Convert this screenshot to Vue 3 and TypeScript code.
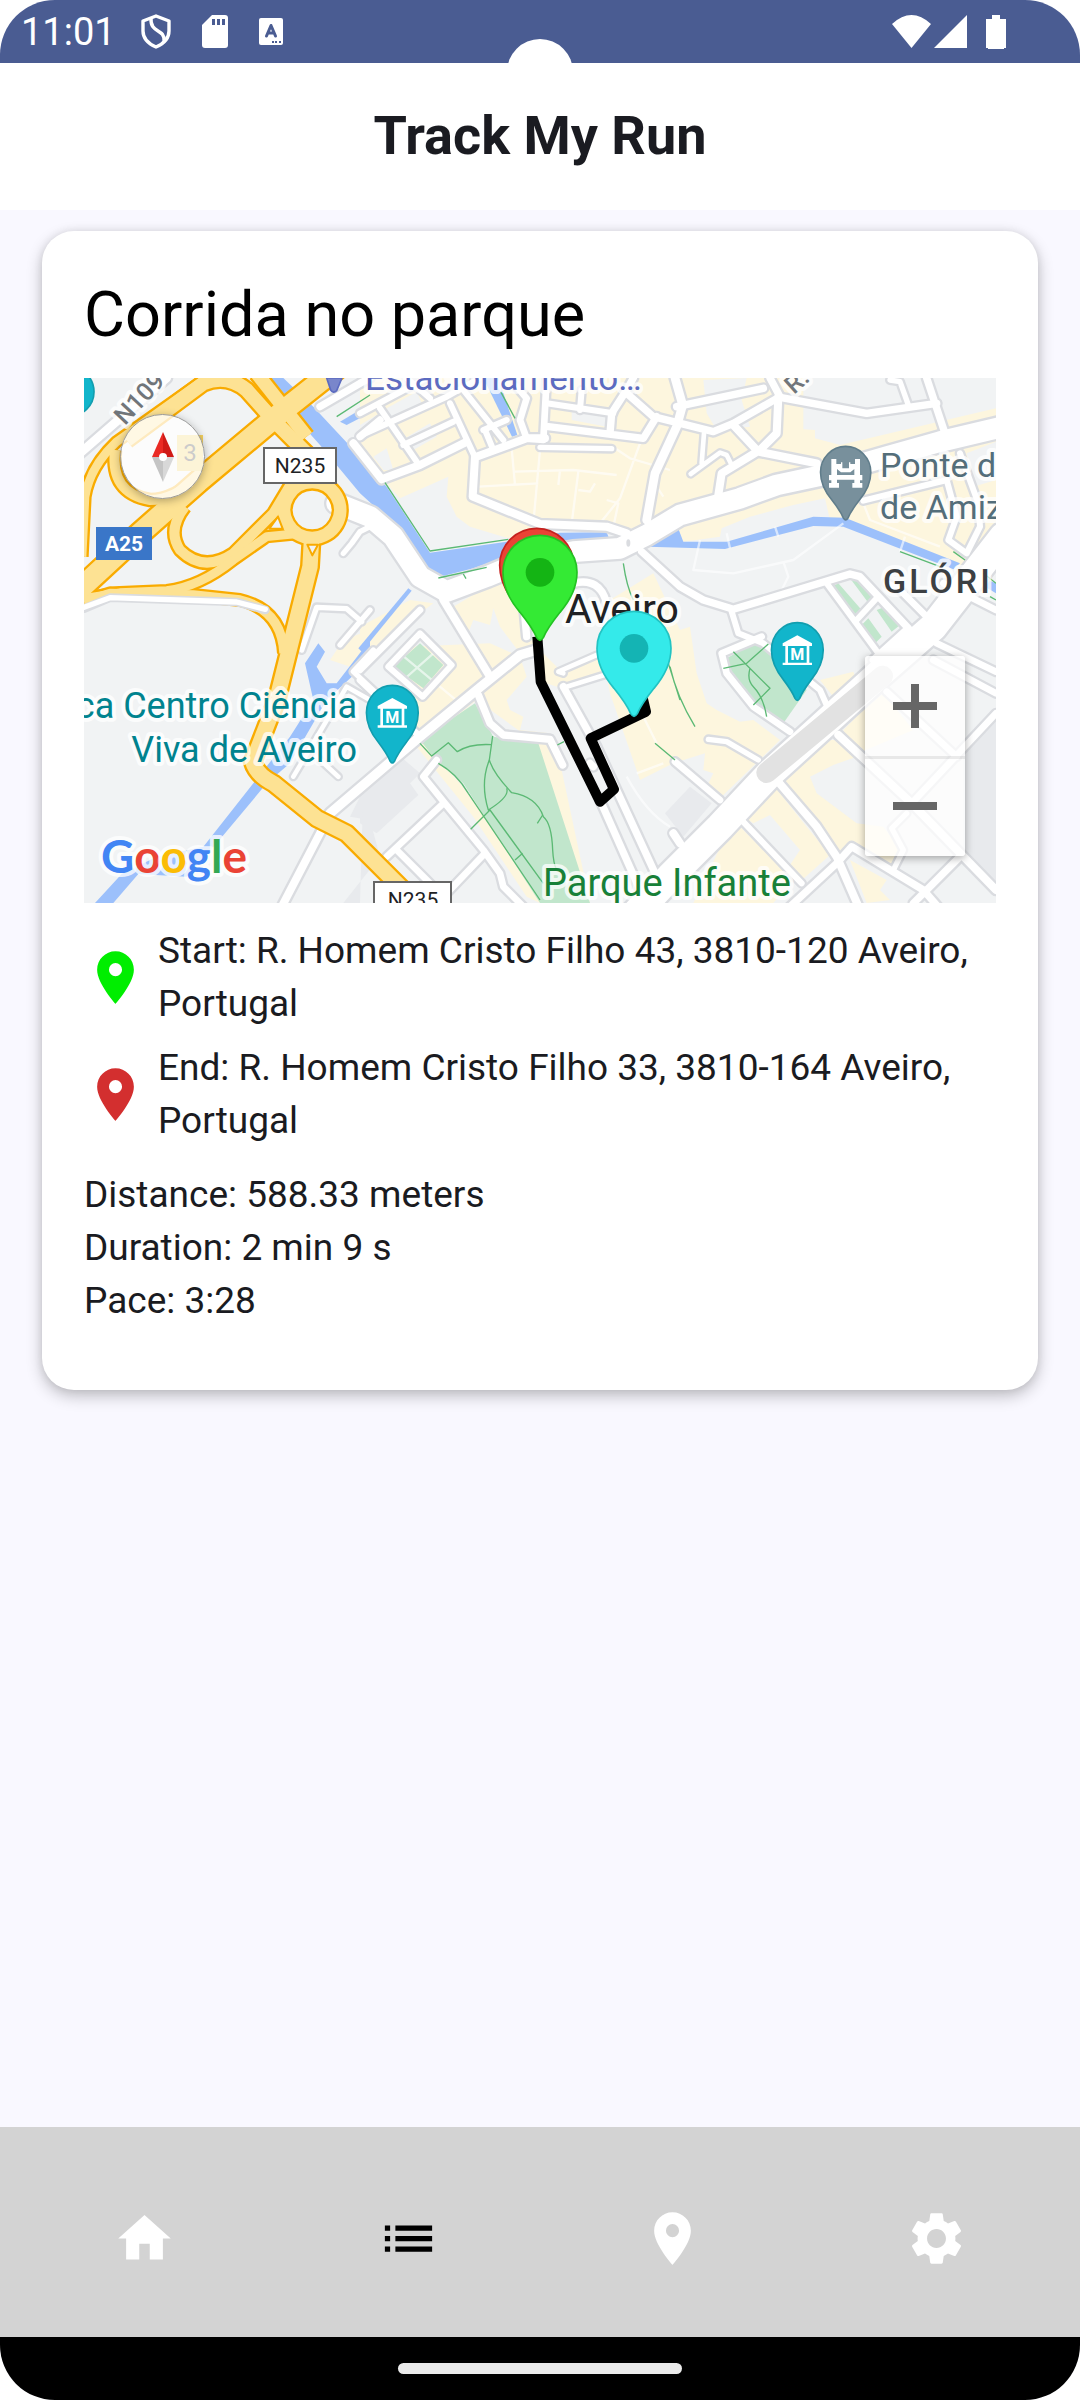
<script setup lang="ts">
interface Road {
  w: number
  d: string
}

interface Place {
  id: string
  label: string
  address: string
  color: string
}

const places: Place[] = [
  { id: 'start', label: 'Start', address: 'R. Homem Cristo Filho 43, 3810-120 Aveiro, Portugal', color: '#00ee00' },
  { id: 'end', label: 'End', address: 'R. Homem Cristo Filho 33, 3810-164 Aveiro, Portugal', color: '#d32f2f' },
]

const stats: string[] = ['Distance: 588.33 meters', 'Duration: 2 min 9 s', 'Pace: 3:28']

const tabs = [
  { id: 'home', name: 'Home', active: false, d: 'M10 20v-6h4v6h5v-8h3L12 3 2 12h3v8z' },
  { id: 'runs', name: 'Runs', active: true, d: 'M3 13h2v-2H3v2zm0 4h2v-2H3v2zm0-8h2V7H3v2zm4 4h14v-2H7v2zm0 4h14v-2H7v2zM7 7v2h14V7H7z' },
  { id: 'track', name: 'Track', active: false, d: 'M12 2C8.13 2 5 5.13 5 9c0 5.25 7 13 7 13s7-7.75 7-13c0-3.87-3.13-7-7-7zm0 9.5a2.5 2.5 0 1 1 0-5 2.5 2.5 0 0 1 0 5z' },
  { id: 'settings', name: 'Settings', active: false, d: 'M19.14 12.94c.04-.3.06-.61.06-.94 0-.32-.02-.64-.07-.94l2.03-1.58c.18-.14.23-.41.12-.61l-1.92-3.32c-.12-.22-.37-.29-.59-.22l-2.39.96c-.5-.38-1.03-.7-1.62-.94l-.36-2.54c-.04-.24-.24-.41-.48-.41h-3.84c-.24 0-.43.17-.47.41l-.36 2.54c-.59.24-1.13.57-1.62.94l-2.39-.96c-.22-.08-.47 0-.59.22L2.74 8.87c-.12.21-.08.47.12.61l2.03 1.58c-.05.3-.09.63-.09.94s.02.64.07.94l-2.03 1.58c-.18.14-.23.41-.12.61l1.92 3.32c.12.22.37.29.59.22l2.39-.96c.5.38 1.03.7 1.62.94l.36 2.54c.05.24.24.41.48.41h3.84c.24 0 .44-.17.47-.41l.36-2.54c.59-.24 1.13-.56 1.62-.94l2.39.96c.22.08.47 0 .59-.22l1.92-3.32c.12-.22.07-.47-.12-.61l-2.01-1.58zM12 15.6c-1.98 0-3.6-1.62-3.6-3.6s1.62-3.6 3.6-3.6 3.6 1.62 3.6 3.6-1.62 3.6-3.6 3.6z' },
]

const pinIcon = tabs[2].d

const blocks: string[] = [
  'M900 24H2230V178L2265 180V205L2340 225L2808 115V215L2720 250L2740 350L2808 330V460L2700 590L2530 535L2390 470L2310 450L2295 385L2200 405L2070 440L1985 475L1980 500L1870 515L1850 465L1660 480L1480 470L1345 505L1230 470L1190 440L1160 380L1165 320L1020 385L975 335L900 240Z',
  'M900 770L1050 690L1120 700L1080 730L900 900Z',
  'M1180 710L1330 620L1400 680L1420 830L1380 850L1320 770L1300 715L1290 765L1240 750L1220 800Z',
  'M1040 830L1290 820L1380 860L1400 920L1340 990L1350 1020L1390 1040L1380 1080L1470 1090L1490 1130L1590 1599H1560L1430 1120L1250 990L1130 1090L1080 1110L1200 1240L1440 1560V1599L1400 1580L1240 1340L1070 1130L1060 1050Z',
  'M1430 830L1500 900L1660 820L1700 780L1650 690L1780 610L1860 780L1890 770L1910 910L1940 1000L1970 1020L2040 1055L2080 1050L2160 1110L1980 1285L1940 1250L1960 1210L1930 1200L1935 1150L1840 1180L1740 1230L1650 970L1640 920L1520 960L1430 930Z',
  'M2170 1225L2310 1110H2335L2390 1160L2320 1185L2250 1220L2270 1270L2390 1360L2470 1370L2530 1450L2500 1500L2370 1420L2330 1450Z',
  'M2050 1340L2140 1245L2240 1370L2310 1455L2220 1535L2180 1500L2220 1440L2130 1335L2080 1360Z',
  'M2280 930L2380 905L2390 930L2320 980ZM2400 1030L2470 970L2560 1080L2370 1160L2350 1080Z',
  'M2370 1470L2480 1530L2460 1560L2490 1590L2420 1599ZM1900 1599L2020 1350L2200 1530L2140 1599Z',
  'M810 870L850 810L930 780V870L900 900Z',
]

const lots: string[] = [
  'M980 115L1070 65L1090 110L1000 165Z',
  'M900 165L950 135L970 170L905 210Z',
  'M1035 205L1110 160L1130 200L1060 240Z',
  'M940 260L980 235L1000 300L970 300Z',
  'M1930 30L2060 24L2045 90L2070 170L1970 180L1940 130Z',
  'M1535 110L1640 130V170L1535 150ZM1680 50L1740 24L1710 80L1670 120Z',
]

const buildings: string[] = [
  'M900 1240L1010 1150L1080 1210L1050 1240L1075 1275L950 1390L900 1360Z',
  'M1815 1330L1890 1250L1955 1300L1870 1400Z',
  'M2808 1025L2710 1120V1450L2808 1550Z',
  'M850 1599L960 1460L930 1350L870 1340L910 1260L900 1599Z',
]

const water: string[] = [
  'M600 24H670L760 110L900 260L980 350L1110 548L1340 515L1500 488L1640 487L1650 512L1500 530L1340 560L1240 595L1135 622L1080 590L1010 470L900 370L780 225Z',
  'M1765 525L1850 463L1870 515L2000 515L2260 440L2355 443L2700 580L2680 598L2350 470L2260 468L1995 537L1765 530Z',
  'M2770 625L2808 640V670L2775 650Z',
  'M1270 24H1315L1372 195L1356 200Z',
  'M840 155L1000 60V92L860 165Z',
  'M105 1599L185 1512L290 1460L430 1430L580 1240L690 1100L760 990L735 880L775 820L795 845L770 890L800 940L830 940L930 810V870L800 990L690 1180L620 1240L470 1420L380 1520L235 1512L160 1599Z',
  'M895 835L1045 655L1055 662L905 845Z',
]

const parks: string[] = [
  'M1080 1110L1245 1000L1300 1100L1435 1120L1590 1599H1440L1280 1350L1210 1240L1135 1180Z',
  'M1000 890L1080 820L1150 885L1090 955Z',
  'M1990 870L2100 810L2240 960L2170 1060L2110 1030Z',
  'M2370 625H2400L2450 690L2430 705ZM2450 720L2475 710L2520 765L2495 785ZM2400 770L2425 745L2465 800L2440 825ZM2315 650L2335 640L2405 720L2385 735Z',
]

const streets: Road[] = [
  { w: 26, d: 'M60 250L320 24' },
  { w: 22, d: 'M780 110L900 40L930 24M900 200L960 150' },
  { w: 16, d: 'M850 550L875 520L900 485L930 470' },
  { w: 16, d: 'M725 840L770 712L860 716L905 755M840 825L930 720' },
  { w: 14, d: 'M700 1220L860 950L930 990M770 1160L835 1220' },
  { w: 24, d: 'M785 1380L660 1620' },
  { w: 24, d: 'M880 220L965 328L1080 285L1215 218' },
  { w: 18, d: 'M960 115L1070 275M905 195L1160 80L1260 24M1030 225L1180 155M1110 85L1040 24M1170 100L1245 262M1275 180L1300 240M1210 60L1330 210M900 130L1100 24M1270 180L1340 150' },
  { w: 24, d: 'M1455 205L1400 205L1245 262L1238 380L1440 462L1640 470L1700 490' },
  { w: 20, d: 'M1370 50L1400 85L1380 150L1400 205L1450 210L1460 24' },
  { w: 18, d: 'M1460 100L1660 130M1560 120L1565 60' },
  { w: 22, d: 'M1465 170L1750 205L1790 140M1650 190L1655 130L1700 60L1720 24M1700 70L1780 140L1960 185L2020 160L2160 80L2130 24' },
  { w: 22, d: 'M1850 110L2110 55' },
  { w: 26, d: 'M1845 24L1868 105L1850 170L1785 310L1760 450' },
  { w: 16, d: 'M1440 232L1655 236' },
  { w: 24, d: 'M2155 80L2150 190L2100 240L1985 310L1975 375M2020 165L2095 245L2270 280' },
  { w: 14, d: 'M1892 312L1980 248L2000 255L2015 285M1932 190L1925 280' },
  { w: 22, d: 'M2160 82L2420 130L2630 100M2600 24L2655 190' },
  { w: 16, d: 'M2490 30L2520 35L2545 105' },
  { w: 18, d: 'M2410 392L2660 330L2690 440L2665 510L2720 550M2700 250L2755 400L2760 470L2720 550' },
  { w: 22, d: 'M1745 545L1860 650L1930 690L2020 718L2370 612L2400 620L2545 775L2440 870' },
  { w: 18, d: 'M2300 640L2455 850M2385 755L2450 685' },
  { w: 18, d: 'M2015 725L2035 790L2110 820L2280 960L2300 1005' },
  { w: 20, d: 'M2105 800L1985 850L2000 910L2080 1010L2190 1085' },
  { w: 16, d: 'M1945 1108L2000 1115L2095 1170' },
  { w: 20, d: 'M1845 1175L1980 1290' },
  { w: 24, d: 'M2335 1095L2555 1300L2808 1560' },
  { w: 20, d: 'M2480 965L2690 1160M2808 1030L2555 1300' },
  { w: 24, d: 'M2150 1230L2270 1370L2330 1460L2400 1620' },
  { w: 18, d: 'M2040 1345L2225 1540' },
  { w: 22, d: 'M2190 1610L2330 1480L2375 1430L2590 1560L2660 1640M2700 1460L2560 1600' },
  { w: 16, d: 'M2540 1330L2495 1375L2530 1440L2500 1500' },
  { w: 20, d: 'M2480 640L2520 660L2600 740M2630 820L2808 905M2620 870L2808 970M2650 640L2808 720' },
  { w: 28, d: 'M810 1330L1080 1100L1250 960L1380 855L1430 840' },
  { w: 22, d: 'M1255 975L1290 1060L1330 1095L1470 1108L1508 1185' },
  { w: 24, d: 'M1150 690L1290 920' },
  { w: 20, d: 'M900 900L1080 720M900 930L1080 1100' },
  { w: 18, d: 'M1080 790L1175 885L1088 980L985 890Z' },
  { w: 16, d: 'M940 840L880 905L960 980' },
  { w: 20, d: 'M1130 1170L1090 1220L1155 1300L1270 1440L1320 1510L1330 1550L1400 1620' },
  { w: 20, d: 'M1150 1300L980 1460M1010 1440L1120 1550M1270 1455L1160 1570' },
  { w: 14, d: 'M1510 910L1495 905L1610 855M1520 950L1650 910' },
  { w: 22, d: 'M1510 950L1610 1130L1790 1520M1620 1290L1740 1560M1600 1190L1590 1180' },
  { w: 22, d: 'M1400 800L1390 690M1540 640Q1620 620 1640 700' },
  { w: 24, d: 'M1840 1390L1860 1420' },
  { w: 62, d: 'M830 400L930 440L1000 500L1080 620L1160 665L1280 620L1400 570L1540 545L1680 535L1760 495L1860 435L2040 385L2150 345L2290 315L2480 260L2640 215L2850 165' },
  { w: 84, d: 'M2830 500L2620 770L2460 910L2130 1210L1980 1370L1830 1520L1700 1660' },
]

const highways: Road[] = [
  { w: 26, d: 'M66 560L75 380Q90 290 170 215L440 24' },
  { w: 42, d: 'M200 210L430 40Q500 10 560 60L640 150L740 250L755 340' },
  { w: 40, d: 'M590 10L740 200' },
  { w: 30, d: 'M165 240Q150 370 270 390Q340 390 420 320' },
  { w: 30, d: 'M375 410Q320 480 360 540Q430 610 520 550L640 430L700 330' },
  { w: 26, d: 'M72 685L180 668L320 662Q420 650 520 570L620 500L720 490' },
  { w: 28, d: 'M72 695L150 670L400 675L540 690Q665 720 672 850' },
  { w: 46, d: 'M755 500L750 590L690 830L650 990L578 1175Q590 1215 640 1240L770 1345L860 1390L1030 1560' },
  { w: 62, d: 'M40 675L240 490L415 335L670 122L830 -5' },
  { w: 38, d: 'M757 336A84 84 0 1 1 756 336Z' },
]

const footpaths: string[] = [
  'M975 338L1110 543L1345 508M1135 624L1280 592M1210 612L1218 626M1322 65L1365 145M1690 580Q1700 650 1720 690',
  'M1080 1120L1115 1158L1165 1118L1192 1145Q1230 1120 1295 1124M1298 1098L1288 1170Q1300 1210 1355 1268Q1430 1280 1450 1340Q1475 1360 1478 1440Q1480 1480 1490 1500',
  'M1288 1170Q1260 1240 1285 1320Q1350 1280 1340 1255M1232 1378L1290 1320L1450 1540M1135 1180Q1190 1210 1225 1270L1440 1590M1365 1470L1388 1450M1448 1335L1432 1360',
  'M1990 895L2060 880L2125 822M2020 845L2130 955L2080 1005M2070 895Q2060 930 2080 950Q2110 980 2120 1040',
  'M1830 890Q1850 980 1905 1070M1825 880L1860 990M1785 1120L1845 1170M1492 1125L1512 1115M2520 545L2640 590M2680 545L2715 570M2770 610L2808 640M2790 680L2808 690M830 140L930 75',
]

const lanes = 'M1255 350L1435 340M1355 235L1365 345M1365 305L1540 300L1670 315M1440 240L1420 460M1500 300L1495 345M1555 305L1535 460M1555 360L1590 365L1605 340M1740 220L1680 385L1620 460M1810 380L1790 350M1665 235L1710 265L1830 300M1640 390L1675 400L1660 470M2000 490L2010 535M2145 470L2155 500M1920 510L1900 600L2020 610L2200 570L2350 460M2170 575L2185 620L2165 660M2410 400L2430 450L2640 530M2535 500L2520 545M1020 850L1200 1000M1730 1210L1810 1180M1700 1220Q1760 1330 1830 1370M1030 930L1120 850M1730 1000L1790 1120'
</script>

<template>
  <div class="screen">
    <header class="status">
      <span class="clock">11:01</span>
      <svg class="sys" width="30" height="35" viewBox="0 0 30 35" aria-hidden="true">
        <path d="M15 2L28 7V17C28 25 22 30 15 33C8 30 2 25 2 17V7Z" fill="none" stroke="#fff" stroke-width="3.4" stroke-linejoin="round" />
        <path d="M10 4C9 20 24 14 23 27" fill="none" stroke="#fff" stroke-width="3.4" />
      </svg>
      <svg class="sys" width="26" height="33" viewBox="0 0 26 33" aria-hidden="true">
        <path fill="#fff" d="M10 0H23Q26 0 26 3V30Q26 33 23 33H3Q0 33 0 30V10Z" />
        <path fill="#4a5c92" d="M10 4h3v6h-3zM15 4h3v6h-3zM20 4h3v6h-3z" />
      </svg>
      <svg class="sys" width="24" height="27" viewBox="0 0 24 27" aria-hidden="true">
        <rect width="24" height="27" rx="2" fill="#fff" />
        <path d="M7.500 18L12 7.500L16.500 18M9 15H15" fill="none" stroke="#4a5c92" stroke-width="3" stroke-linecap="round" stroke-linejoin="round" />
        <path fill="#4a5c92" d="M13 23h2v2h-2zM16 23h2v2h-2zM20 23h2v2h-2z" />
      </svg>
      <svg class="radio" width="75" height="33" viewBox="0 0 75 33" aria-hidden="true">
        <path fill="#fff" d="M0 9Q19.500 -9 39 9L19.500 33ZM42 33L75 0V33Z" />
      </svg>
      <svg width="20" height="34" viewBox="0 0 20 34" aria-hidden="true">
        <path fill="#fff" d="M6 0H14V4H20V33H18V34H2V33H0V4H6Z" />
      </svg>
      <span class="camera"></span>
    </header>

    <div class="topbar"><h1>Track My Run</h1></div>

    <main>
      <article class="card">
        <h2>Corrida no parque</h2>

        <div class="map">
          <svg class="canvas" viewBox="0 0 912 525" preserveAspectRatio="xMidYMid slice" role="img" aria-label="Map of the run in Aveiro">
            <defs>
              <path id="pin" d="M-111 0A111 111 0 0 1 111 0C111 48 90 85 60 120C32 155 20 172 10 196Q0 212 -10 196C-20 172 -32 155 -60 120C-90 85 -111 48 -111 0Z" />
              <g id="museum">
                <path fill="#fff" d="M0 -44L44 -20V-12H-44V-20ZM-36 -12H-28V40H-36ZM28 -12H36V40H28ZM-44 38H44V45H-44Z" />
                <text y="30" font-size="48" font-weight="700" fill="#fff" text-anchor="middle">M</text>
              </g>
            </defs>

            <g transform="scale(.333333) translate(-72 -24)" stroke-linejoin="round">
              <rect x="72" y="24" width="2736" height="1575" fill="#f1f3f4" />
              <path v-for="d in blocks" :key="d" :d="d" fill="#fdf6de" />
              <path v-for="d in lots" :key="d" :d="d" fill="#f1f3f4" />
              <path v-for="d in buildings" :key="d" :d="d" fill="#e8eaed" />
              <path v-for="d in parks" :key="d" :d="d" fill="#c1e6cc" />
              <path v-for="d in water" :key="d" :d="d" fill="#9cc0fb" />
              <path :d="lanes" fill="none" stroke="#fff" stroke-width="7" stroke-opacity=".6" />
              <g fill="none" stroke="#dadce0" stroke-linecap="round">
                <path v-for="r in streets" :key="r.d" :d="r.d" :stroke-width="r.w + 14" />
              </g>
              <g fill="none" stroke="#fff" stroke-linecap="round">
                <path v-for="r in streets" :key="r.d" :d="r.d" :stroke-width="r.w" />
              </g>
              <path d="M2120 1208L2468 918" fill="none" stroke="#e2e2e2" stroke-width="62" stroke-linecap="round" />
              <ellipse cx="1705" cy="519" rx="6" ry="11" fill="#dadce0" />
              <path v-for="d in footpaths" :key="d" :d="d" fill="none" stroke="#5bb974" stroke-width="4" />

              <g fill="none" stroke="#f9ab00">
                <path v-for="r in highways" :key="r.d" :d="r.d" :stroke-width="r.w + 14" />
              </g>
              <g fill="none" stroke="#fde293">
                <path v-for="r in highways" :key="r.d" :d="r.d" :stroke-width="r.w" />
              </g>
              <path d="M654 440L668 476H628ZM742 524H774L757 556Z" fill="#f1f3f4" stroke="#f9ab00" stroke-width="6" />
              <path d="M72 716L150 683L530 696L616 720" fill="none" stroke="#dadce0" stroke-width="26" stroke-linecap="round" />
              <path d="M72 712L150 683L530 696L616 718" fill="none" stroke="#fff" stroke-width="16" stroke-linecap="round" />
              <path d="M800 24H846L830 62Q820 72 812 60Z" fill="#7986cb" stroke="#5c6bc0" stroke-width="5" />
              <circle cx="28" cy="65" r="74" fill="#12b5cb" stroke="#129eaf" stroke-width="5" />
            </g>

            <g class="labels">
              <text x="281" y="12" font-size="35" fill="#5c6bc0">Estacionamento…</text>
              <text transform="translate(41 48) rotate(-47)" font-size="25" font-weight="500" fill="#70757a">N109</text>
              <text transform="translate(710 17) rotate(-42)" font-size="25" font-weight="500" fill="#70757a">R.</text>
              <text x="796" y="99" font-size="34" fill="#546e7a">Ponte d</text>
              <text x="796" y="141" font-size="34" fill="#546e7a">de Amiz</text>
              <text class="district" x="799" y="215" font-size="34" font-weight="500" fill="#3c4043">GLÓRI</text>
              <text x="273" y="340" font-size="36" fill="#00838f" text-anchor="end">ca Centro Ciência</text>
              <text x="273" y="384" font-size="36" fill="#00838f" text-anchor="end">Viva de Aveiro</text>
              <text x="459" y="518" font-size="38" fill="#188038">Parque Infante</text>
              <text x="481" y="245" font-size="41" fill="#202124">Aveiro</text>
            </g>

            <g font-size="21" text-anchor="middle">
              <rect x="180" y="70" width="72" height="35" fill="#fff" stroke="#666" stroke-width="2" />
              <text x="216" y="95" fill="#202124">N235</text>
              <rect x="290" y="504" width="77" height="35" fill="#fff" stroke="#666" stroke-width="2" />
              <text x="329" y="529" fill="#202124">N235</text>
              <rect x="12" y="149" width="56" height="33" fill="#3a76c8" />
              <text x="40" y="173" fill="#fff" font-weight="700">A25</text>
              <rect x="93" y="57" width="26" height="36" fill="#f4d160" />
              <text x="106" y="83" font-size="24" fill="#333">3</text>
            </g>

            <text class="labels" x="17" y="495" font-size="46" font-family="Lato, sans-serif" font-weight="700"><tspan fill="#4285f4">G</tspan><tspan fill="#ea4335">o</tspan><tspan fill="#fbbc05">o</tspan><tspan fill="#4285f4">g</tspan><tspan fill="#34a853">l</tspan><tspan fill="#ea4335">e</tspan></text>

            <g transform="scale(.333333) translate(-72 -24)">
              <path d="M1432 800L1442 935L1620 1295L1662 1258L1592 1105L1758 1025L1746 975" fill="none" stroke="#000" stroke-width="30" stroke-linejoin="round" />
              <g transform="translate(2357 307)">
                <use href="#pin" transform="scale(.68 .7)" fill="#78909c" stroke="#607d8b" stroke-width="7" />
                <path fill="#fff" d="M-43 -40H-28V-25H-14V-30H-10V-12H10V-30H14V-25H28V-40H43V8H50V24H43V32H50V46H20V32H26V22H-26V32H-20V46H-50V32H-43V24H-50V8H-43ZM-26 -10V8H26V-10L14 0H-14Z" />
              </g>
              <g transform="translate(997 1028)">
                <use href="#pin" transform="scale(.7 .74)" fill="#12b5cb" stroke="#129eaf" stroke-width="7" />
                <use href="#museum" />
              </g>
              <g transform="translate(2212 840)">
                <use href="#pin" transform="scale(.7 .74)" fill="#12b5cb" stroke="#129eaf" stroke-width="7" />
                <use href="#museum" />
              </g>
              <use href="#pin" transform="translate(1430 586)" fill="#ea4335" stroke="#c5221f" stroke-width="5" />
              <g transform="translate(1440 607)">
                <use href="#pin" fill="#34ea34" stroke="#22c322" stroke-width="5" />
                <circle r="43" fill="#14b414" />
              </g>
              <g transform="translate(1722 835)">
                <use href="#pin" fill="#34eaea" stroke="#22c3c3" stroke-width="5" />
                <circle r="43" fill="#14b4b4" />
              </g>
            </g>
          </svg>

          <button class="compass" type="button" aria-label="Reset north">
            <svg width="22" height="50" viewBox="0 0 22 50" aria-hidden="true">
              <path d="M11 0L0 25H11Z" fill="#ea2a24" /><path d="M11 0L22 25H11Z" fill="#d01a16" />
              <path d="M0 25H11V50Z" fill="#c4c4c4" /><path d="M22 25H11V50Z" fill="#d8d8d8" />
              <circle cx="11" cy="25" r="4" fill="#fff" />
            </svg>
          </button>
          <div class="zoom">
            <button type="button" aria-label="Zoom in">
              <svg width="44" height="44" viewBox="0 0 44 44" aria-hidden="true"><path fill="#666" d="M18 0h8v18h18v8H26v18h-8V26H0v-8h18z" /></svg>
            </button>
            <button type="button" aria-label="Zoom out">
              <svg width="44" height="44" viewBox="0 0 44 44" aria-hidden="true"><path fill="#666" d="M0 18h44v8H0z" /></svg>
            </button>
          </div>
        </div>

        <ul class="places">
          <li v-for="p in places" :key="p.id">
            <svg width="63" height="63" viewBox="0 0 24 24" aria-hidden="true"><path :fill="p.color" :d="pinIcon" /></svg>
            <span>{{ p.label }}: {{ p.address }}</span>
          </li>
        </ul>

        <div class="stats">
          <p v-for="s in stats" :key="s">{{ s }}</p>
        </div>
      </article>
    </main>

    <nav class="tabs">
      <button v-for="t in tabs" :key="t.id" type="button" :class="{ active: t.active }" :aria-label="t.name">
        <svg width="63" height="63" viewBox="0 0 24 24" aria-hidden="true"><path fill="currentColor" :d="t.d" /></svg>
      </button>
    </nav>
    <footer class="gesture"><span></span></footer>
  </div>
</template>

<style>
body {
  margin: 0;
  background: #fff;
}
</style>

<style scoped>
.screen {
  display: flex;
  flex-direction: column;
  min-height: 100vh;
  overflow: hidden;
  border-radius: 55px;
  background: #f9f8ff;
  color: #1a1b21;
  font-family: Roboto, sans-serif;
}

.screen * {
  box-sizing: border-box;
}

button {
  display: flex;
  align-items: center;
  justify-content: center;
  padding: 0;
  border: 0;
  background: none;
}

.status {
  position: relative;
  display: flex;
  align-items: center;
  height: 63px;
  padding: 0 74px 0 21px;
  background: #4a5c92;
  color: #fff;
}

.clock {
  width: 90px;
  font-size: 38px;
}

.sys {
  margin-left: 30px;
}

.sys + .sys {
  margin-left: 31px;
}

.radio {
  margin: 0 19px 0 auto;
}

.camera {
  position: absolute;
  top: 39px;
  left: calc(50% - 33px);
  width: 66px;
  height: 66px;
  border-radius: 50%;
  background: #fff;
}

.topbar {
  position: relative;
  display: flex;
  align-items: center;
  justify-content: center;
  height: 147px;
  padding-bottom: 2px;
  background: #fff;
}

h1 {
  margin: 0;
  font-size: 54px;
  font-weight: 700;
  line-height: 64px;
}

main {
  flex: 1;
  padding: 21px 42px;
}

.card {
  padding: 42px 42px 63px;
  border-radius: 32px;
  background: #fff;
  box-shadow: 0 6px 16px rgb(0 0 0 / 24%), 0 0 8px rgb(0 0 0 / 8%);
}

h2 {
  margin: 0 0 21px;
  color: #000;
  font-size: 63px;
  font-weight: 400;
  line-height: 84px;
}

.map {
  position: relative;
  height: 525px;
  overflow: hidden;
}

.canvas {
  display: block;
  width: 100%;
  height: 100%;
}

.labels {
  paint-order: stroke;
  stroke: rgb(255 255 255 / 75%);
  stroke-width: 8px;
  stroke-linejoin: round;
}

.district {
  letter-spacing: 3px;
}

.compass {
  position: absolute;
  top: 36px;
  left: 36px;
  width: 85px;
  height: 85px;
  border: 1px solid #999;
  border-radius: 50%;
  background: rgb(255 255 255 / 75%);
  box-shadow: 0 2px 8px rgb(0 0 0 / 30%);
}

.zoom {
  position: absolute;
  right: 31px;
  bottom: 47px;
  width: 100px;
  border-radius: 3px;
  background: rgb(255 255 255 / 75%);
  box-shadow: 0 2px 8px rgb(0 0 0 / 35%);
}

.zoom button {
  width: 100px;
  height: 100px;
}

.zoom button + button {
  box-shadow: inset 0 3px 0 rgb(0 0 0 / 8%);
}

.places {
  display: flex;
  flex-direction: column;
  gap: 11px;
  margin: 21px 0;
  padding: 0;
  list-style: none;
}

.places li {
  display: flex;
  align-items: center;
  gap: 11px;
}

.places svg {
  flex: none;
}

.places span,
.stats p {
  margin: 0;
  font-size: 37px;
  line-height: 53px;
}

.tabs {
  display: flex;
  height: 210px;
  padding: 12px 12px 0;
  background: #d3d3d3;
}

.tabs button {
  flex: 1;
  color: #fff;
}

.tabs .active {
  color: #000;
}

.gesture {
  display: flex;
  align-items: center;
  justify-content: center;
  height: 63px;
  background: #000;
}

.gesture span {
  width: 284px;
  height: 11px;
  border-radius: 6px;
  background: #ebebeb;
}
</style>
